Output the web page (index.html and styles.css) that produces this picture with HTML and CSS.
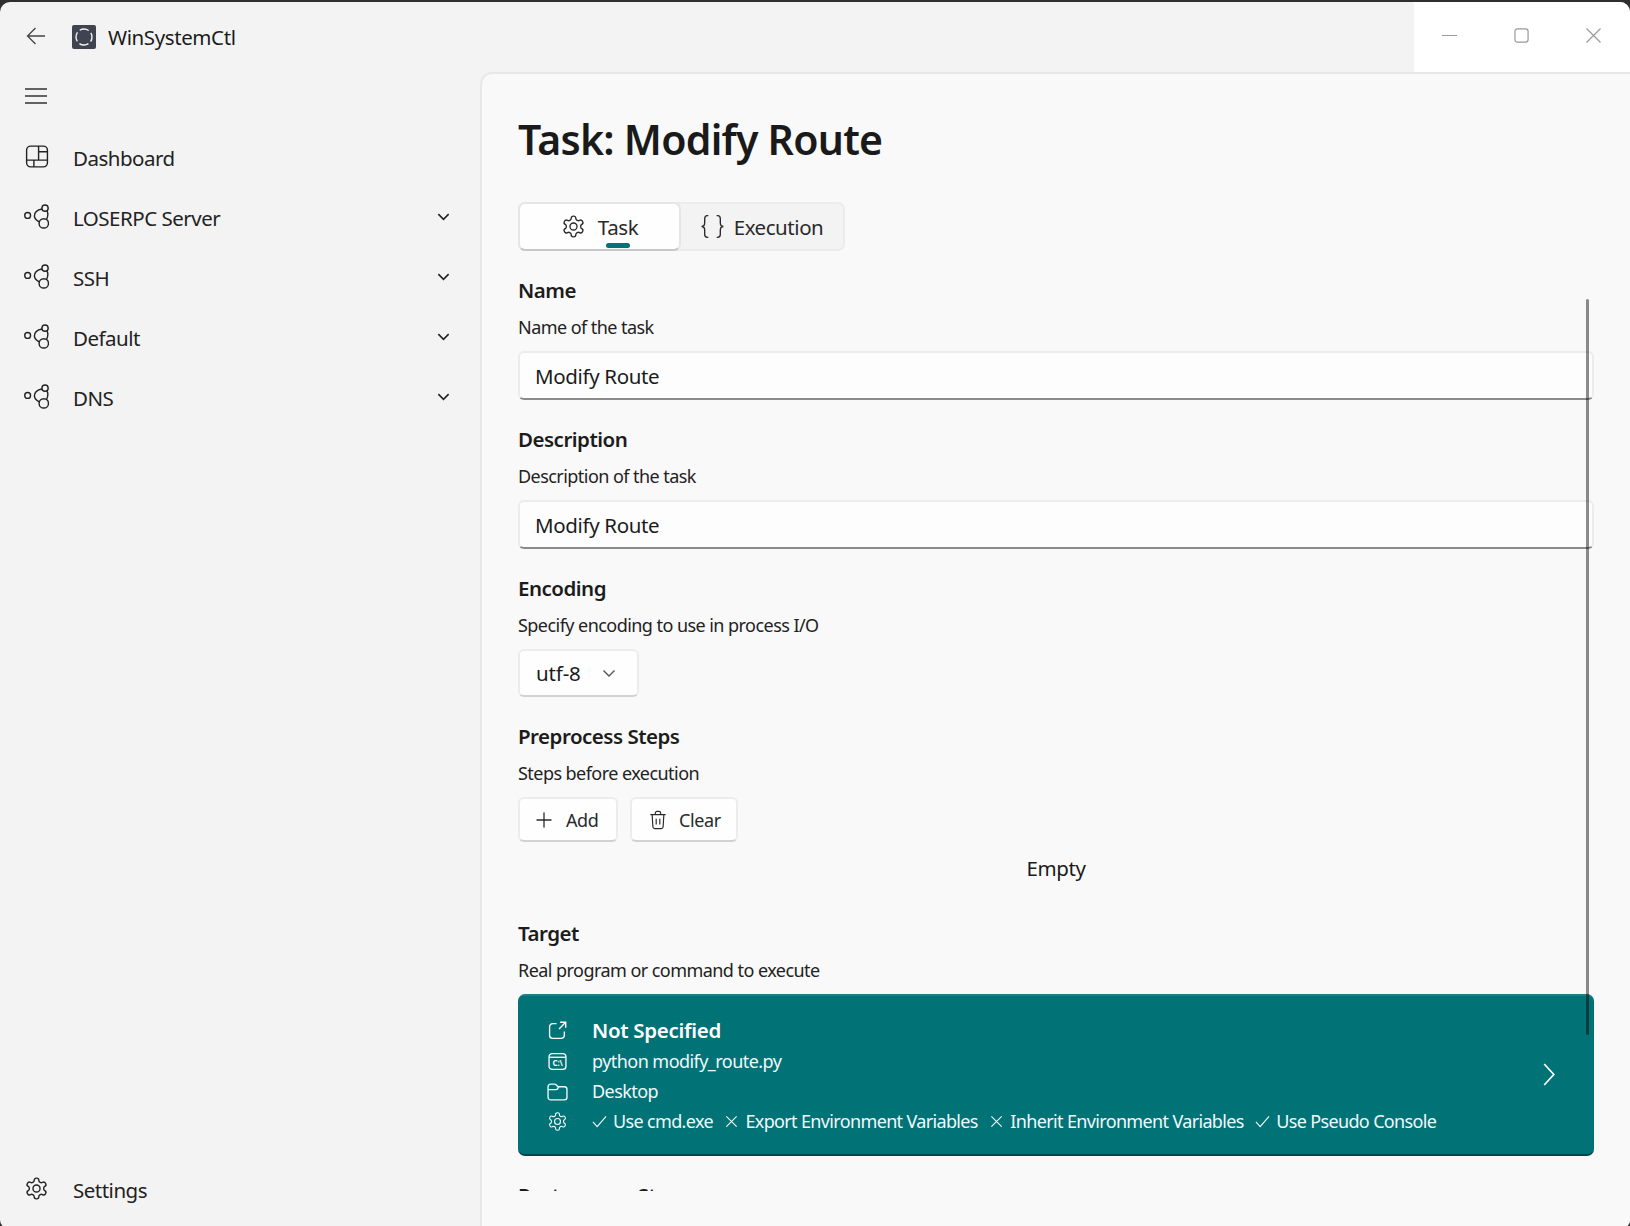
FILE: index.html
```html
<!DOCTYPE html>
<html lang="en">
<head>
  <meta charset="UTF-8" />
  <title>WinSystemCtl</title>
  <meta name="viewport" content="width=device-width, initial-scale=1.0" />
  <link rel="stylesheet" href="styles.css">
</head>
<body>
  <svg class="sprites" width="0" height="0">
    <symbol id="i-gear" viewBox="0 0 24 24">
      <path d="M12.22 2h-.44a2 2 0 0 0-2 2v.18a2 2 0 0 1-1 1.73l-.43.25a2 2 0 0 1-2 0l-.15-.08a2 2 0 0 0-2.73.73l-.22.38a2 2 0 0 0 .73 2.73l.15.1a2 2 0 0 1 1 1.72v.51a2 2 0 0 1-1 1.74l-.15.09a2 2 0 0 0-.73 2.73l.22.38a2 2 0 0 0 2.73.73l.15-.08a2 2 0 0 1 2 0l.43.25a2 2 0 0 1 1 1.73V20a2 2 0 0 0 2 2h.44a2 2 0 0 0 2-2v-.18a2 2 0 0 1 1-1.73l.43-.25a2 2 0 0 1 2 0l.15.08a2 2 0 0 0 2.73-.73l.22-.39a2 2 0 0 0-.73-2.73l-.15-.08a2 2 0 0 1-1-1.74v-.5a2 2 0 0 1 1-1.74l.15-.09a2 2 0 0 0 .73-2.73l-.22-.38a2 2 0 0 0-2.73-.73l-.15.08a2 2 0 0 1-2 0l-.43-.25a2 2 0 0 1-1-1.73V4a2 2 0 0 0-2-2z"/>
      <circle cx="12" cy="12" r="3.4"/>
    </symbol>
    <symbol id="i-nodes" viewBox="0 0 24 24">
      <circle cx="3.5" cy="11" r="2.8"/>
      <circle cx="20.2" cy="4" r="3"/>
      <circle cx="19" cy="18.6" r="4.5"/>
      <path d="M17.3 4.800C12.800 5.600 10 8.200 10 11.500c0 2 1.400 3.800 4.600 5.700"/>
      <path d="M22 6.500c1.600 2.600 1.200 5-.4 8.400"/>
    </symbol>
    <symbol id="i-chev" viewBox="0 0 16 16">
      <path d="M2.500 5.500 8 11l5.500-5.500"/>
    </symbol>
    <symbol id="i-check" viewBox="0 0 16 16">
      <path d="M1 8.500l4.500 5L15 2.500"/>
    </symbol>
    <symbol id="i-cross" viewBox="0 0 16 16">
      <path d="M2.500 2.500l11 11M13.500 2.500l-11 11"/>
    </symbol>
  </svg>

  <div class="app">
    <header class="titlebar">
      <svg class="back-icon" viewBox="0 0 20 20"><path d="M19 10H2M9.500 2 1.500 10l8 8"/></svg>
      <div class="logo">
        <svg viewBox="0 0 24 24"><circle cx="12" cy="12" r="8" stroke-dasharray="9.500 3.070" stroke-dashoffset="4.750"/></svg>
      </div>
      <span class="app-name">WinSystemCtl</span>
      <div class="caption">
        <div class="caption-btn"><svg viewBox="0 0 16 16"><path d="M0 8h16"/></svg></div>
        <div class="caption-btn"><svg viewBox="0 0 16 16"><rect x="1" y="1" width="14" height="14" rx="2.500"/></svg></div>
        <div class="caption-btn"><svg viewBox="0 0 16 16"><path d="M.5.5l15 15M15.500.5l-15 15"/></svg></div>
      </div>
    </header>

    <div class="body">
      <nav class="sidebar">
        <div class="hamburger">
          <svg viewBox="0 0 24 18"><path d="M1 2h22M1 9h22M1 16h22"/></svg>
        </div>
        <ul class="nav-list">
          <li class="nav-item">
            <svg class="nav-icon" viewBox="0 0 24 24"><rect x="2.500" y="2" width="20" height="20" rx="4"/><path d="M2.500 15.500h20M14 2v13.500M14 7.500h8.500M9.500 15.500V22"/></svg>
            <span>Dashboard</span>
          </li>
          <li class="nav-item">
            <svg class="nav-icon"><use href="#i-nodes"/></svg>
            <span>LOSERPC Server</span>
            <svg class="nav-chev"><use href="#i-chev"/></svg>
          </li>
          <li class="nav-item">
            <svg class="nav-icon"><use href="#i-nodes"/></svg>
            <span>SSH</span>
            <svg class="nav-chev"><use href="#i-chev"/></svg>
          </li>
          <li class="nav-item">
            <svg class="nav-icon"><use href="#i-nodes"/></svg>
            <span>Default</span>
            <svg class="nav-chev"><use href="#i-chev"/></svg>
          </li>
          <li class="nav-item">
            <svg class="nav-icon"><use href="#i-nodes"/></svg>
            <span>DNS</span>
            <svg class="nav-chev"><use href="#i-chev"/></svg>
          </li>
        </ul>
        <div class="nav-item nav-footer">
          <svg class="nav-icon"><use href="#i-gear"/></svg>
          <span>Settings</span>
        </div>
      </nav>

      <main class="panel">
        <h1 class="page-title">Task: Modify Route</h1>

        <div class="tabs">
          <div class="tab tab-active">
            <svg class="tab-icon"><use href="#i-gear"/></svg>
            <span>Task</span>
            <i class="tab-marker"></i>
          </div>
          <div class="tab tab-second">
            <svg class="tab-icon" viewBox="0 0 24 24"><path d="M8 1.500H7C5 1.500 4.500 2.800 4.500 4.500v4C4.500 10.500 3.500 12 1.500 12c2 0 3 1.500 3 3.500v4c0 1.700.5 3 2.500 3h1M16 1.500h1c2 0 2.500 1.300 2.500 3v4c0 2 1 3.500 3 3.500-2 0-3 1.500-3 3.500v4c0 1.700-.5 3-2.500 3h-1"/></svg>
            <span>Execution</span>
          </div>
        </div>

        <div class="scroller">
          <section class="field">
            <h2>Name</h2>
            <p>Name of the task</p>
            <div class="text-input">Modify Route</div>
          </section>

          <section class="field">
            <h2>Description</h2>
            <p>Description of the task</p>
            <div class="text-input">Modify Route</div>
          </section>

          <section class="field">
            <h2>Encoding</h2>
            <p>Specify encoding to use in process I/O</p>
            <div class="combo">
              <span>utf-8</span>
              <svg><use href="#i-chev"/></svg>
            </div>
          </section>

          <section class="field">
            <h2>Preprocess Steps</h2>
            <p>Steps before execution</p>
            <div class="btn-row">
              <div class="btn btn-add">
                <svg viewBox="0 0 16 16"><path d="M8 .5v15M.5 8h15"/></svg>
                <span>Add</span>
              </div>
              <div class="btn btn-clear">
                <svg viewBox="0 0 20 22"><path d="M1.500 5h17M7 5V3.500C7 2.300 7.800 1.500 9 1.500h2c1.200 0 2 .8 2 2V5M3.500 5l.8 13.500c.1 1.300 1 2 2.200 2h7c1.200 0 2.100-.7 2.200-2L16.500 5M8 9.500v6.500M12 9.500v6.500"/></svg>
                <span>Clear</span>
              </div>
            </div>
            <div class="empty">Empty</div>
          </section>

          <section class="field">
            <h2>Target</h2>
            <p>Real program or command to execute</p>
            <div class="target-card">
              <div class="target-rows">
                <div class="target-row target-title">
                  <svg viewBox="0 0 18 18"><path d="M8 2.500H4.500a3 3 0 0 0-3 3v8a3 3 0 0 0 3 3h8a3 3 0 0 0 3-3V10M10.500 7.500 16.500 1.500M11.500 1.200h5.300v5.300"/></svg>
                  <span>Not Specified</span>
                </div>
                <div class="target-row">
                  <svg viewBox="0 0 18 18"><rect x="1" y="1.500" width="16" height="15" rx="3"/><path d="M1 5h16"/><text x="9" y="13" class="cmd-text" text-anchor="middle">C:\</text></svg>
                  <span>python modify_route.py</span>
                </div>
                <div class="target-row">
                  <svg class="folder-icon" viewBox="0 0 20 18"><path d="M1 4.500C1 3 2 2 3.500 2h3.700c.6 0 1 .2 1.400.6L10.500 4.500h6c1.400 0 2.500 1 2.500 2.500v7.500c0 1.400-1.100 2.500-2.500 2.500h-13C2.100 17 1 15.900 1 14.500zM1 7.200h7.600c.6 0 1-.2 1.400-.6l1-1.800"/></svg>
                  <span>Desktop</span>
                </div>
                <div class="target-row">
                  <svg class="gear-small"><use href="#i-gear"/></svg>
                  <div class="flags">
                    <span class="flag"><svg><use href="#i-check"/></svg>Use cmd.exe</span>
                    <span class="flag"><svg><use href="#i-cross"/></svg>Export Environment Variables</span>
                    <span class="flag"><svg><use href="#i-cross"/></svg>Inherit Environment Variables</span>
                    <span class="flag"><svg><use href="#i-check"/></svg>Use Pseudo Console</span>
                  </div>
                </div>
              </div>
              <svg class="target-chev" viewBox="0 0 12 24"><path d="M1 1l10 11L1 23"/></svg>
            </div>
          </section>

          <section class="field">
            <h2>Postprocess Steps</h2>
          </section>
        </div>

        <div class="scrollbar"></div>
      </main>
    </div>
  </div>
</body>
</html>
```

FILE: styles.css
```css
* {
  box-sizing: border-box;
}

html,
body {
  height: 100%;
}

body {
  margin: 0;
  background: #2f2f2f;
  color: #1b1b1b;
  font-family: 'Noto Sans', 'Open Sans', sans-serif;
  overflow: hidden;
}

svg {
  fill: none;
  stroke: currentColor;
  stroke-width: 1.5;
  flex: none;
}

.sprites {
  position: absolute;
}

.app {
  height: 100%;
  margin-top: 2px;
  display: flex;
  flex-direction: column;
  background: #f3f3f3;
  border-radius: 10px 10px 8px 8px;
  overflow: hidden;
}

/* Title bar */
.titlebar {
  height: 70px;
  flex: none;
  display: flex;
  align-items: center;
}

.back-icon {
  width: 20px;
  height: 20px;
  margin-left: 26px;
  margin-top: -2px;
  stroke: #444;
  stroke-width: 1.3;
}

.logo {
  width: 24px;
  height: 24px;
  margin-left: 26px;
  background: #3f4450;
  border-radius: 2px;
}

.logo svg {
  display: block;
  width: 24px;
  height: 24px;
  stroke: #f4f4f4;
  stroke-width: 1.4;
}

.app-name {
  margin-left: 12px;
  font-size: 20.5px;
  letter-spacing: -0.4px;
}

.caption {
  margin-left: auto;
  align-self: stretch;
  display: flex;
  background: #fff;
}

.caption-btn {
  width: 72px;
  display: flex;
  align-items: center;
  justify-content: center;
  color: #9a9a9a;
  padding: 0 2px 4px 0;
}

.caption-btn svg {
  width: 15px;
  height: 15px;
  stroke-width: 1.3;
}

.body {
  flex: 1;
  display: flex;
  min-height: 0;
}

/* Navigation */
.sidebar {
  width: 480px;
  flex: none;
  display: flex;
  flex-direction: column;
  padding-bottom: 8px;
  font-size: 20.5px;
}

.hamburger {
  height: 48px;
  display: flex;
  align-items: center;
  padding-left: 24px;
  color: #333;
}

.hamburger svg {
  width: 24px;
  height: 18px;
  stroke-width: 1.3;
}

.nav-list {
  list-style: none;
  margin: 8px 0 0;
  padding: 0;
  flex: 1;
}

.nav-item {
  height: 60px;
  display: flex;
  align-items: center;
  padding-left: 24px;
  color: #222;
  letter-spacing: -0.5px;
}

.nav-item span {
  margin-left: 24px;
}

.nav-icon {
  width: 25px;
  height: 25px;
  margin-top: -3px;
  stroke-width: 1.35;
}

.nav-chev {
  width: 15px;
  height: 15px;
  margin-left: auto;
  margin-right: 29px;
  margin-top: -4px;
  stroke-width: 1.7;
}

/* Content panel */
.panel {
  position: relative;
  flex: 1;
  min-width: 0;
  display: flex;
  flex-direction: column;
  background: #f9f9f9;
  border-left: 2px solid #e8e8e8;
  border-top: 2px solid #e8e8e8;
  border-top-left-radius: 12px;
  padding: 27px 36px 37px 36px;
}

.page-title {
  margin: 0;
  font-size: 41px;
  font-weight: 600;
  line-height: 76px;
  height: 75px;
  letter-spacing: -0.75px;
  color: #1a1a1a;
}

.tabs {
  margin-top: 26px;
  width: 327px;
  height: 49px;
  flex: none;
  display: flex;
  background: #f3f3f3;
  border: 2px solid #ececec;
  border-radius: 7px;
  font-size: 20.5px;
  letter-spacing: -0.4px;
}

.tab {
  position: relative;
  display: flex;
  align-items: center;
  justify-content: center;
  gap: 12px;
  color: #2a2a2a;
}

.tab-active {
  width: 163px;
  margin: -2px 0 -2px -2px;
  background: #fefefe;
  border: 2px solid #e6e6e6;
  border-bottom-color: #c8c8c8;
  border-radius: 7px;
}

.tab-second {
  flex: 1;
  gap: 9px;
  padding-right: 1px;
  letter-spacing: -0.45px;
}

.tab-icon {
  width: 25px;
  height: 25px;
  stroke-width: 1.3;
}

.tab-marker {
  position: absolute;
  left: 86px;
  bottom: 1px;
  width: 24px;
  height: 5px;
  border-radius: 3px;
  background: #017276;
}

.scroller {
  flex: 1;
  min-height: 0;
  margin-top: 24px;
  overflow: hidden;
}

.field {
  margin-bottom: 24px;
}

.field h2 {
  margin: 0;
  font-size: 20.5px;
  line-height: 30px;
  font-weight: 600;
  letter-spacing: -0.5px;
  color: #1c1c1c;
}

.field p {
  margin: 7px 0 9px;
  font-size: 18px;
  line-height: 30px;
  letter-spacing: -0.55px;
  color: #222;
}

.text-input {
  height: 49px;
  padding: 0 15px;
  display: flex;
  align-items: center;
  font-size: 20.5px;
  letter-spacing: -0.35px;
  background: #fdfdfd;
  border: 2px solid #ececec;
  border-bottom: 2px solid #8b8b8b;
  border-radius: 6px;
}

.combo {
  width: 121px;
  height: 48px;
  padding: 0 16px;
  display: flex;
  align-items: center;
  font-size: 20.5px;
  letter-spacing: -0.15px;
  background: #fefefe;
  border: 2px solid #ececec;
  border-bottom-color: #d2d2d2;
  border-radius: 6px;
}

.combo svg {
  width: 16px;
  height: 16px;
  margin-left: auto;
  margin-right: 4px;
  stroke: #555;
  stroke-width: 1.4;
}

.btn-row {
  display: flex;
  gap: 12px;
}

.btn {
  height: 45px;
  display: flex;
  align-items: center;
  font-size: 18px;
  letter-spacing: -0.4px;
  background: #fefefe;
  border: 2px solid #ececec;
  border-bottom-color: #d2d2d2;
  border-radius: 6px;
  color: #2a2a2a;
}

.btn-add {
  width: 100px;
  padding-left: 16px;
  gap: 14px;
}

.btn-add svg {
  width: 16px;
  height: 16px;
  stroke-width: 1.3;
}

.btn-clear {
  width: 108px;
  padding-left: 17px;
  gap: 12px;
}

.btn-clear svg {
  width: 18px;
  height: 20px;
  stroke-width: 1.3;
}

.empty {
  margin-top: 11px;
  margin-bottom: 35px;
  text-align: center;
  font-size: 20.5px;
  line-height: 30px;
  letter-spacing: -0.4px;
}

/* Target card */
.target-card {
  height: 162px;
  margin-top: 0;
  padding: 20px 39px 20px 28px;
  display: flex;
  align-items: center;
  background: #017276;
  border-top: 2px solid #1a8085;
  border-bottom: 2px solid #03474b;
  border-radius: 7px;
  color: #f2fafa;
}

.target-rows {
  flex: 1;
  display: flex;
  flex-direction: column;
}

.target-row {
  height: 30px;
  display: flex;
  align-items: center;
  gap: 25px;
  font-size: 18px;
  letter-spacing: -0.55px;
}

.target-row > svg {
  width: 19px;
  height: 19px;
  margin-left: 2px;
  stroke-width: 1.3;
}

.target-row > .folder-icon {
  width: 21px;
  margin-left: 1px;
  margin-right: -1px;
}

.target-row > .gear-small {
  width: 21px;
  height: 21px;
  margin-left: 1px;
  margin-right: -1px;
}

.cmd-text {
  font-size: 7.5px;
  font-weight: 700;
  fill: currentColor;
  stroke: none;
  letter-spacing: -0.2px;
}

.target-title {
  height: 32px;
  font-size: 20.5px;
  font-weight: 600;
  letter-spacing: -0.3px;
  color: #fff;
}

.flags {
  display: flex;
  gap: 11.5px;
  letter-spacing: -0.65px;
}

.flag {
  display: flex;
  align-items: center;
  gap: 6px;
}

.flag svg {
  width: 15px;
  height: 15px;
  stroke-width: 1.2;
}

.target-chev {
  width: 12px;
  height: 23px;
  margin-top: -2px;
  stroke-width: 1.8;
  color: #fff;
}

.scrollbar {
  position: absolute;
  left: 1104px;
  top: 225px;
  width: 3px;
  height: 736px;
  border-radius: 2px;
  background: rgba(0, 0, 0, 0.45);
}
```
